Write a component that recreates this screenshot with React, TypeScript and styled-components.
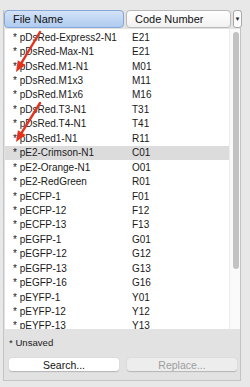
import { createGlobalStyle } from "styled-components";
import styled from "styled-components";

const GlobalStyle = createGlobalStyle`
  html, body {
    margin: 0;
    padding: 0;
    background: #e8e8e8;
  }
  body {
    font-family: "Liberation Sans", Arial, sans-serif;
    color: #1a1a1a;
  }
`;

const Page = styled.div`
  position: relative;
  width: 250px;
  height: 387px;
  padding: 10px 0 0 3px;
  box-sizing: border-box;
  overflow: hidden;
`;

const Panel = styled.div`
  width: 238px;
  height: 371px;
  box-sizing: border-box;
  border: 1px solid #c4c4c4;
  border-top: none;
  background: #e2e2e2;
  display: flex;
  flex-direction: column;
`;

const HeaderRow = styled.div`
  display: flex;
  height: 19px;
  gap: 2px;
  margin-right: -2px;
`;

const HeaderButton = styled.div<{ $active?: boolean; $width: number }>`
  width: ${p => p.$width}px;
  height: 18px;
  box-sizing: border-box;
  display: flex;
  align-items: center;
  padding-left: 8px;
  font-size: 11px;
  color: #111;
  border-radius: 4px;
  border: 1px solid ${p => (p.$active ? "#86a7d8" : "#b9b9b9")};
  background: ${p =>
    p.$active
      ? "linear-gradient(#d3e3f7, #aecbef)"
      : "linear-gradient(#ffffff, #f1f1f1)"};
`;

const MenuButton = styled.div`
  width: 9px;
  height: 18px;
  box-sizing: border-box;
  display: flex;
  align-items: center;
  justify-content: center;
  border: 1px solid #a9a9a9;
  border-radius: 3px;
  background: #fbfbfb;
  font-size: 6px;
  color: #222;
`;

const ListArea = styled.div`
  display: flex;
  height: 300px;
  flex-shrink: 0;
  background: #ffffff;
  margin-left: 1px;
`;

const Rows = styled.div`
  flex: 1;
  padding-top: 1px;
  overflow: hidden;
`;

const Row = styled.div<{ $selected?: boolean }>`
  display: grid;
  grid-template-columns: 119px 1fr;
  align-items: center;
  height: 14.44px;
  padding-left: 8px;
  font-size: 10px;
  white-space: nowrap;
  background: ${p => (p.$selected ? "#dcdcdc" : "transparent")};
`;

const ScrollTrack = styled.div`
  width: 11px;
  background: #fafafa;
  border-left: 1px solid #ececec;
  padding: 3px 0 0 3px;
  box-sizing: border-box;
`;

const ScrollThumb = styled.div`
  width: 6px;
  height: 237px;
  border-radius: 3px;
  background: #c2c2c2;
`;

const Status = styled.div`
  font-size: 9.6px;
  padding: 8px 0 0 5px;
  height: 20px;
  box-sizing: border-box;
`;

const ButtonRow = styled.div`
  display: flex;
  gap: 8px;
  padding: 9px 0 0 5px;
`;

const PushButton = styled.div<{ $disabled?: boolean }>`
  width: 110px;
  height: 13px;
  box-sizing: border-box;
  display: flex;
  align-items: center;
  justify-content: center;
  font-size: 10.5px;
  border-radius: 3px;
  color: ${p => (p.$disabled ? "#9d9d9d" : "#111")};
  background: ${p => (p.$disabled ? "#ededed" : "#ffffff")};
  box-shadow: 0 0.5px 1px rgba(0, 0, 0, 0.2);
`;

const Arrows = styled.svg`
  position: absolute;
  left: 0;
  top: 0;
  pointer-events: none;
`;

const rows: [string, string][] = [
  ["pDsRed-Express2-N1", "E21"],
  ["pDsRed-Max-N1", "E21"],
  ["pDsRed.M1-N1", "M01"],
  ["pDsRed.M1x3", "M11"],
  ["pDsRed.M1x6", "M16"],
  ["pDsRed.T3-N1", "T31"],
  ["pDsRed.T4-N1", "T41"],
  ["pDsRed1-N1", "R11"],
  ["pE2-Crimson-N1", "C01"],
  ["pE2-Orange-N1", "O01"],
  ["pE2-RedGreen", "R01"],
  ["pECFP-1", "F01"],
  ["pECFP-12", "F12"],
  ["pECFP-13", "F13"],
  ["pEGFP-1", "G01"],
  ["pEGFP-12", "G12"],
  ["pEGFP-13", "G13"],
  ["pEGFP-16", "G16"],
  ["pEYFP-1", "Y01"],
  ["pEYFP-12", "Y12"],
  ["pEYFP-13", "Y13"],
];

const Arrow = ({ x1, y1, x2, y2 }: { x1: number; y1: number; x2: number; y2: number }) => {
  const a = Math.atan2(y2 - y1, x2 - x1);
  const len = 11;
  const w = 4.5;
  const bx = x2 - len * Math.cos(a);
  const by = y2 - len * Math.sin(a);
  const px = -Math.sin(a) * w;
  const py = Math.cos(a) * w;
  return (
    <g>
      <line x1={x1} y1={y1} x2={bx} y2={by} stroke="#e5321c" strokeWidth={2.4} strokeLinecap="round" />
      <polygon points={`${x2},${y2} ${bx + px},${by + py} ${bx - px},${by - py}`} fill="#e5321c" />
    </g>
  );
};

const App = () => {
  return (
    <Page>
      <GlobalStyle />
      <Panel>
        <HeaderRow>
          <HeaderButton $active $width={121}>File Name</HeaderButton>
          <HeaderButton $width={106}>Code Number</HeaderButton>
          <MenuButton>▼</MenuButton>
        </HeaderRow>
        <ListArea>
          <Rows>
            {rows.map(([name, code]) => (
              <Row key={name} $selected={name === "pE2-Crimson-N1"}>
                <span>* {name}</span>
                <span>{code}</span>
              </Row>
            ))}
          </Rows>
          <ScrollTrack>
            <ScrollThumb />
          </ScrollTrack>
        </ListArea>
        <Status>* Unsaved</Status>
        <ButtonRow>
          <PushButton>Search...</PushButton>
          <PushButton $disabled>Replace...</PushButton>
        </ButtonRow>
      </Panel>
      <Arrows width={250} height={387}>
        <Arrow x1={40} y1={32} x2={16} y2={72} />
        <Arrow x1={40} y1={103} x2={16} y2={142} />
      </Arrows>
    </Page>
  );
};

export default App;
